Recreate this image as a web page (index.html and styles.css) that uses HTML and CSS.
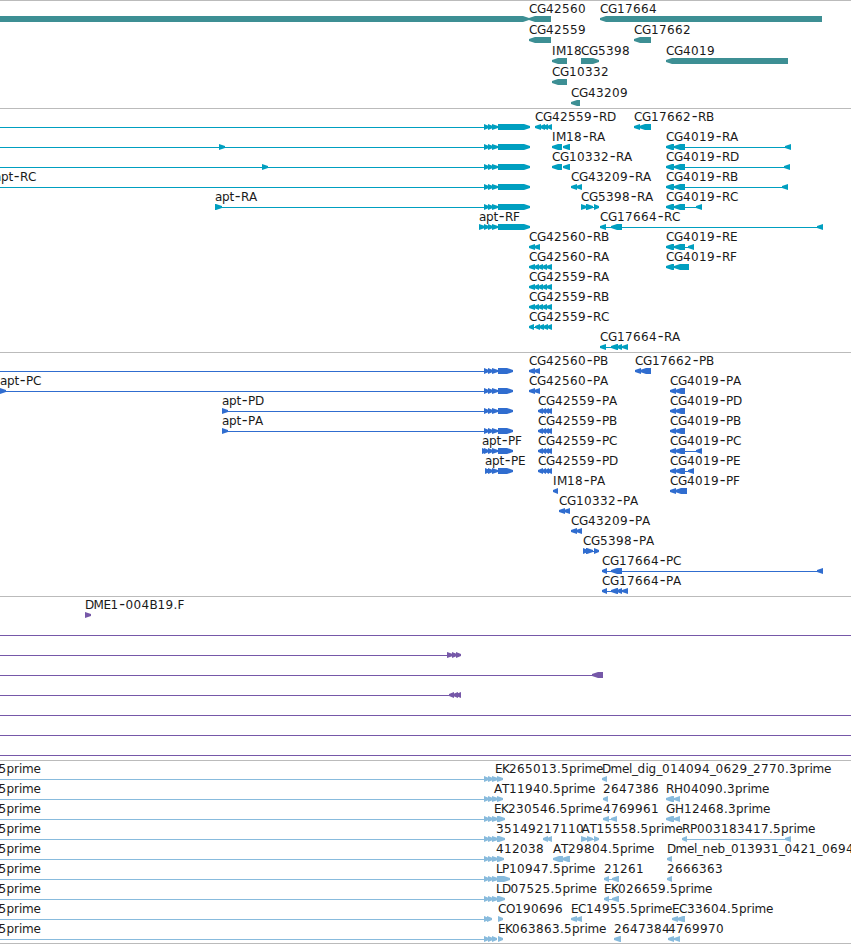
FILE: index.html
```html
<!DOCTYPE html>
<html lang="en">
<head>
<meta charset="utf-8">
<title>Genome tracks</title>
<link rel="stylesheet" href="styles.css">
</head>
<body>
<main class="browser">
  <section class="track track-gene" id="gene"></section>
  <section class="track track-transcript" id="transcript"></section>
  <section class="track track-protein" id="protein"></section>
  <section class="track track-clone" id="clone"></section>
  <section class="track track-est" id="est"></section>
</main>
<script src="tracks.js"></script>
</body>
</html>
```
FILE: styles.css
```css
body {
  margin: 0;
  background: #fff;
}

.browser {
  display: flex;
  flex-direction: column;
  width: 851px;
  height: 944px;
  overflow: hidden;
}

.track {
  border-top: 1px solid #bbb;
  padding-bottom: 3px;
}

.row {
  display: block;
  width: 851px;
  height: 20px;
  overflow: visible;
}

.track-gene { color: #3d8f94; padding-bottom: 2px; }
.track-gene .row { height: 21px; }
.track-transcript { color: #009fc0; }
.track-protein { color: #306dcf; }
.track-clone { color: #7658a8; }
.track-est {
  color: #88bbdd;
  padding-bottom: 2px;
  border-bottom: 1px solid #bbb;
}

.label {
  font-family: "DejaVu Sans", sans-serif;
  font-size: 12px;
  fill: #1a1a1a;
}

.dash { font-size: 16px; }

.feature { fill: currentColor; }
```
FILE: tracks.js
```js
const NS = "http://www.w3.org/2000/svg";

// Advance of each character in a label, in pixels.
const ADV = { C: 8, G: 9, I: 4, M: 10, "-": 7, R: 8, A: 8, B: 8, D: 8.5, E: 7, F: 6, P: 7,
  K: 7, T: 7, L: 6, O: 9, H: 9, a: 7, p: 7.5, t: 4.5, r: 5, i: 3, m: 11.5, e: 7, l: 3,
  d: 8, g: 8, n: 8, b: 8, _: 5.5, ".": 4 };

// Row items: T label at x, N intron line, L / R exons pointing left / right.
const T = (x, s) => ({ k: "T", x, s });
const N = (a, b) => ({ k: "N", a, b });
const L = (...p) => ({ k: "L", p });
const R = (...p) => ({ k: "R", p });

const tri = R(484, 489, 488, 493, 492, 498);
const apt = [N(-5, 498), tri, R(498, 530)];
const aptP = [N(-5, 498), tri, R(498, 513)];
const multi = [N(529, 552), L(529, 535, 534, 539, 538, 543, 542, 547, 546, 552)];
const multiP = [L(538, 543, 542, 546, 545, 549, 547, 552)];
const r4019 = (n, end) => [T(666, n), N(666, end), L(666, 674, 674, 685, end - 6, end)];
const p4019 = n => [T(670, n), L(670, 676, 675, 685)];
const est = (...p) => [T(-1.5, "5prime"), N(-5, 498), R(484, 489, 488, 493, ...p)];

const tracks = {
  gene: [
    [R(-10, 529), T(529, "CG42560"), L(529, 551), T(600, "CG17664"), L(600, 822)],
    [T(529, "CG42559"), L(529, 551), T(634, "CG17662"), L(634, 651)],
    [T(552, "IM18"), L(552, 567), T(581, "CG5398"), R(581, 599), T(666, "CG4019"), L(666, 788)],
    [T(552, "CG10332"), L(552, 567)],
    [T(571, "CG43209"), L(571, 580)]
  ],
  transcript: [
    [...apt, T(535, "CG42559-RD"), L(535, 541, 540, 545, 543, 548, 547, 552),
      T(634, "CG17662-RB"), L(634, 640, 639, 651)],
    [...apt, R(219, 225), T(552, "IM18-RA"), L(552, 562, 563, 570), ...r4019("CG4019-RA", 791)],
    [...apt, R(262, 268), T(552, "CG10332-RA"), L(552, 562, 563, 570), ...r4019("CG4019-RD", 790)],
    [...apt, T(-6, "apt-RC"), T(571, "CG43209-RA"), L(571, 577, 576, 582), ...r4019("CG4019-RB", 788)],
    [T(215, "apt-RA"), N(215, 498), R(215, 222), tri, R(498, 530),
      T(581, "CG5398-RA"), N(581, 599), R(581, 587, 586, 593, 594, 599), ...r4019("CG4019-RC", 702)],
    [T(479, "apt-RF"), N(479, 498), R(479, 485), tri, R(498, 530),
      T(600, "CG17664-RC"), N(600, 823), L(600, 606, 611, 622, 817, 823)],
    [T(529, "CG42560-RB"), L(529, 535, 534, 540), ...r4019("CG4019-RE", 694)],
    [T(529, "CG42560-RA"), ...multi, T(666, "CG4019-RF"), L(666, 674, 674, 689)],
    [T(529, "CG42559-RA"), ...multi],
    [T(529, "CG42559-RB"), ...multi],
    [T(529, "CG42559-RC"), N(529, 552), L(529, 534, 535, 540, 539, 544, 543, 548, 547, 552)],
    [T(600, "CG17664-RA"), N(600, 628), L(600, 606, 611, 618, 617, 622, 622, 628)]
  ],
  protein: [
    [...aptP, T(529, "CG42560-PB"), L(529, 535, 534, 540), T(635, "CG17662-PB"), L(635, 641, 640, 651)],
    [T(0, "apt-PC"), ...aptP, R(0, 6), T(529, "CG42560-PA"), L(529, 535, 534, 540), ...p4019("CG4019-PA")],
    [T(222, "apt-PD"), N(222, 498), R(222, 228), tri, R(498, 513),
      T(538, "CG42559-PA"), ...multiP, ...p4019("CG4019-PD")],
    [T(222, "apt-PA"), N(222, 498), R(222, 228), tri, R(498, 513),
      T(538, "CG42559-PB"), ...multiP, ...p4019("CG4019-PB")],
    [T(482, "apt-PF"), R(482, 487), tri, R(498, 513),
      T(538, "CG42559-PC"), ...multiP, ...p4019("CG4019-PC"), N(685, 702), L(696, 702)],
    [T(485, "apt-PE"), N(485, 498), R(485, 490, 488, 493, 492, 498, 498, 513),
      T(538, "CG42559-PD"), ...multiP, ...p4019("CG4019-PE"), N(685, 694), L(688, 694)],
    [T(553, "IM18-PA"), L(553, 558), T(670, "CG4019-PF"), L(670, 676, 675, 687)],
    [T(559, "CG10332-PA"), L(559, 565, 564, 570)],
    [T(571, "CG43209-PA"), L(571, 577, 576, 582)],
    [T(583, "CG5398-PA"), N(583, 599), R(583, 588, 586, 593, 594, 599)],
    [T(602, "CG17664-PC"), N(602, 823), L(602, 607, 611, 622, 817, 823)],
    [T(602, "CG17664-PA"), N(602, 628), L(602, 607, 611, 618, 617, 622, 622, 628)]
  ],
  clone: [
    [T(85, "DME1-004B19.F"), R(85, 91)],
    [N(0, 851)],
    [N(0, 461), R(447, 453, 452, 457, 456, 461)],
    [N(0, 603), L(592, 603)],
    [N(0, 461), L(449, 454, 453, 458, 456, 461)],
    [N(0, 851)],
    [N(0, 851)],
    [N(0, 851)]
  ],
  est: [
    [...est(492, 498, 497, 503), T(495, "EK265013.5prime"),
      T(602, "Dmel_dig_014094_0629_2770.3prime"), L(602, 607)],
    [...est(492, 498, 497, 503), T(494, "AT11940.5prime"), T(603, "2647386"), L(603, 608),
      T(666, "RH04090.3prime"), L(666, 674, 674, 680)],
    [...est(492, 498, 497, 505), T(494, "EK230546.5prime"), T(603, "4769961"),
      N(603, 617), L(603, 609, 611, 617), T(666, "GH12468.3prime"), L(666, 674, 674, 680)],
    [...est(492, 498, 497, 505), T(496, "35149217110"), L(543, 548, 547, 552),
      T(581.5, "AT15558.5prime"), N(581, 599), R(581, 587, 587, 593, 594, 599),
      T(682, "RP003183417.5prime"), N(682, 791), L(682, 687, 785, 791)],
    [...est(492, 498, 497, 504), T(496, "412038"), T(553, "AT29804.5prime"),
      L(553, 563, 562, 570), T(667, "Dmel_neb_013931_0421_0694"), L(667, 672)],
    [...est(492, 498, 497, 510), T(496, "LP10947.5prime"), T(604, "21261"),
      N(604, 619), L(604, 609, 612, 619), T(667, "2666363"), L(667, 672)],
    [...est(492, 498, 497, 505), T(496, "LD07525.5prime"), T(604, "EK026659.5prime"),
      N(604, 619), L(604, 609, 612, 619)],
    [T(-1.5, "5prime"), N(-5, 488), R(484, 489, 487, 492, 498, 503), T(498, "CO190696"),
      T(571, "EC14955.5prime"), L(571, 577, 576, 582), T(672, "EC33604.5prime"), L(672, 678, 677, 685)],
    [T(-1.5, "5prime"), N(-5, 497), R(484, 489, 488, 493, 492, 497, 498, 503),
      T(498, "EK063863.5prime"), T(614, "2647384"), L(614, 621),
      T(668, "4769970"), L(668, 674, 674, 680)]
  ]
};

function add(parent, tag, attrs) {
  const el = document.createElementNS(NS, tag);
  for (const key in attrs) el.setAttribute(key, attrs[key]);
  parent.appendChild(el);
  return el;
}

function drawLabel(svg, item) {
  const text = add(svg, "text", { class: "label", y: 12 });
  let x = item.x;
  for (const part of item.s.split(/(-)/)) {
    const xs = [...part].map(c => {
      const at = c === "-" ? x + 0.7 : x;
      x += ADV[c] || 8;
      return at;
    });
    const attrs = { x: xs.join(" ") };
    if (part === "-") attrs.class = "dash";
    add(text, "tspan", attrs).textContent = part;
  }
}

function drawExon(svg, a, b, left) {
  const head = Math.min(6, b - a);
  const tip = left ? a : b;
  const neck = left ? a + head : b - head;
  const tail = left ? b : a;
  add(svg, "polygon", {
    class: "feature",
    points: `${tip},17 ${neck},15 ${tail},15 ${tail},21 ${neck},21 ${tip},19`
  });
}

for (const id in tracks) {
  const section = document.getElementById(id);
  for (const items of tracks[id]) {
    const svg = document.createElementNS(NS, "svg");
    svg.setAttribute("class", "row");
    for (const item of items) {
      if (item.k === "T") drawLabel(svg, item);
      else if (item.k === "N") add(svg, "rect", { class: "feature", x: item.a, y: 18, width: item.b - item.a, height: 1 });
      else for (let i = 0; i < item.p.length; i += 2) drawExon(svg, item.p[i], item.p[i + 1], item.k === "L");
    }
    section.appendChild(svg);
  }
}
```
